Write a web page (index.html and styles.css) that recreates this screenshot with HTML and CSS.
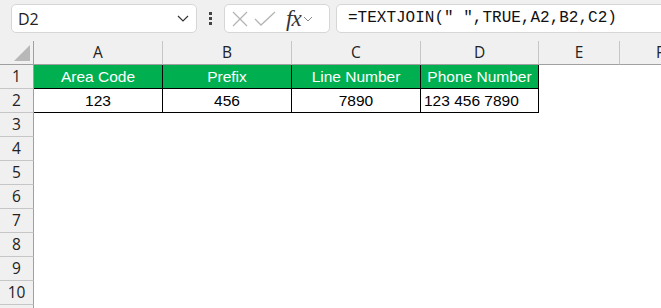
FILE: index.html
```html
<!DOCTYPE html>
<html lang="en">
<head>
    <meta charset="UTF-8">
    <title>TEXTJOIN phone number</title>
    <link rel="stylesheet" href="styles.css">
</head>
<body>
    <div class="toolbar">
        <div class="name-box">
            <span>D2</span>
            <svg class="chevron" width="12" height="7" viewBox="0 0 12 7"><path d="M1 1 L6 6 L11 1" fill="none" stroke="#333" stroke-width="1.2"/></svg>
        </div>
        <div class="dots"><i></i><i></i><i></i></div>
        <div class="fx-box">
            <svg width="18" height="18" viewBox="0 0 18 18"><path d="M2 2 L16 16 M16 2 L2 16" stroke="#b4b4b4" stroke-width="1.3" fill="none"/></svg>
            <svg width="22" height="16" viewBox="0 0 22 16"><path d="M1 8 L7 14 L21 1" stroke="#b4b4b4" stroke-width="1.3" fill="none"/></svg>
            <span class="fx">fx</span>
            <svg width="10" height="6" viewBox="0 0 10 6"><path d="M1 1 L5 5 L9 1" fill="none" stroke="#888" stroke-width="1"/></svg>
        </div>
        <div class="formula">=TEXTJOIN(" ",TRUE,A2,B2,C2)</div>
    </div>

    <div class="sheet">
        <div class="corner"><span class="tri"></span></div>
        <div class="col-head">A</div>
        <div class="col-head">B</div>
        <div class="col-head">C</div>
        <div class="col-head">D</div>
        <div class="col-head">E</div>
        <div class="col-head last">F</div>

        <div class="row-head">1</div>
        <div class="cell th">Area Code</div>
        <div class="cell th">Prefix</div>
        <div class="cell th">Line Number</div>
        <div class="cell th">Phone Number</div>
        <div class="cell"></div>
        <div class="cell"></div>

        <div class="row-head">2</div>
        <div class="cell td">123</div>
        <div class="cell td">456</div>
        <div class="cell td">7890</div>
        <div class="cell td left">123 456 7890</div>
        <div class="cell"></div>
        <div class="cell"></div>

        <div class="row-head">3</div><div class="cell blank"></div>
        <div class="row-head">4</div><div class="cell blank"></div>
        <div class="row-head">5</div><div class="cell blank"></div>
        <div class="row-head">6</div><div class="cell blank"></div>
        <div class="row-head">7</div><div class="cell blank"></div>
        <div class="row-head">8</div><div class="cell blank"></div>
        <div class="row-head">9</div><div class="cell blank"></div>
        <div class="row-head">10</div><div class="cell blank"></div>
        <div class="row-head"></div><div class="cell blank"></div>
    </div>
</body>
</html>
```

FILE: styles.css
```css
/* Base */
html, body {
    margin: 0;
    padding: 0;
    background-color: #fff;
    font-family: "Liberation Sans", Arial, sans-serif;
    overflow: hidden;
}

/* Formula bar */
.toolbar {
    display: flex;
    align-items: flex-start;
    height: 41px;
    padding: 4px 0 0 11px;
    box-sizing: border-box;
    background-color: #f0f0f0;
}

.name-box {
    width: 186px;
    height: 29px;
    box-sizing: border-box;
    background-color: #fff;
    border: 1px solid #d6d6d6;
    border-radius: 5px;
    display: flex;
    align-items: center;
    justify-content: space-between;
    padding: 0 7px 0 6px;
    font-family: "Open Sans", sans-serif;
    font-size: 16px;
    color: #222;
}

.dots {
    width: 27px;
    height: 29px;
    display: flex;
    flex-direction: column;
    align-items: center;
    justify-content: center;
    gap: 2px;
}

.dots i {
    display: block;
    width: 3px;
    height: 3px;
    background-color: #444;
}

.fx-box {
    width: 106px;
    height: 29px;
    box-sizing: border-box;
    background-color: #fff;
    border: 1px solid #d6d6d6;
    border-radius: 5px;
    display: flex;
    align-items: center;
    gap: 5px;
    padding-left: 6px;
}

.fx-box .fx {
    font-family: "Liberation Serif", serif;
    font-style: italic;
    font-size: 23px;
    line-height: 27px;
    color: #333;
    margin-left: 5px;
    margin-right: -3px;
    letter-spacing: -1px;
}

.formula {
    flex: 1;
    height: 29px;
    margin-left: 6px;
    margin-right: -10px;
    box-sizing: border-box;
    background-color: #fff;
    border: 1px solid #d6d6d6;
    border-radius: 5px;
    font-family: "Liberation Mono", monospace;
    font-size: 16px;
    line-height: 27px;
    padding-left: 11px;
    color: #111;
    white-space: pre;
}

/* Grid */
.sheet {
    display: grid;
    grid-template-columns: 34px 129px 129px 129px 118px 81px 1fr;
    grid-auto-rows: 24px;
}

.corner,
.col-head {
    background-color: #f0f0f0;
    border-bottom: 1px solid #a0a0a0;
    box-sizing: border-box;
}

.corner {
    border-right: 1px solid #a0a0a0;
    position: relative;
}

.corner .tri {
    position: absolute;
    right: 3px;
    bottom: 3px;
    width: 0;
    height: 0;
    border-left: 16px solid transparent;
    border-bottom: 16px solid #b8b8b8;
}

.col-head {
    border-right: 1px solid #c6c6c6;
    text-align: center;
    font-family: "Open Sans", sans-serif;
    font-size: 15.5px;
    line-height: 23px;
    color: #222;
}

.col-head.last {
    border-right: none;
    text-align: left;
    padding-left: 36px;
}

.row-head {
    grid-column: 1;
    background-color: #f0f0f0;
    border-right: 1px solid #a0a0a0;
    border-bottom: 1px solid #c6c6c6;
    box-sizing: border-box;
    text-align: center;
    font-family: "Open Sans", sans-serif;
    font-size: 15.5px;
    line-height: 23px;
    color: #222;
}

.cell {
    box-sizing: border-box;
    font-size: 15.5px;
    line-height: 23px;
    text-align: center;
}

.cell.blank {
    grid-column: 2 / -1;
}

.th {
    background-color: #00b050;
    color: #fff;
    border-right: 1px solid #000;
    border-bottom: 1px solid #000;
}

.td {
    color: #000;
    border-right: 1px solid #000;
    border-bottom: 1px solid #000;
}

.td.left {
    text-align: left;
    padding-left: 3px;
}
```
